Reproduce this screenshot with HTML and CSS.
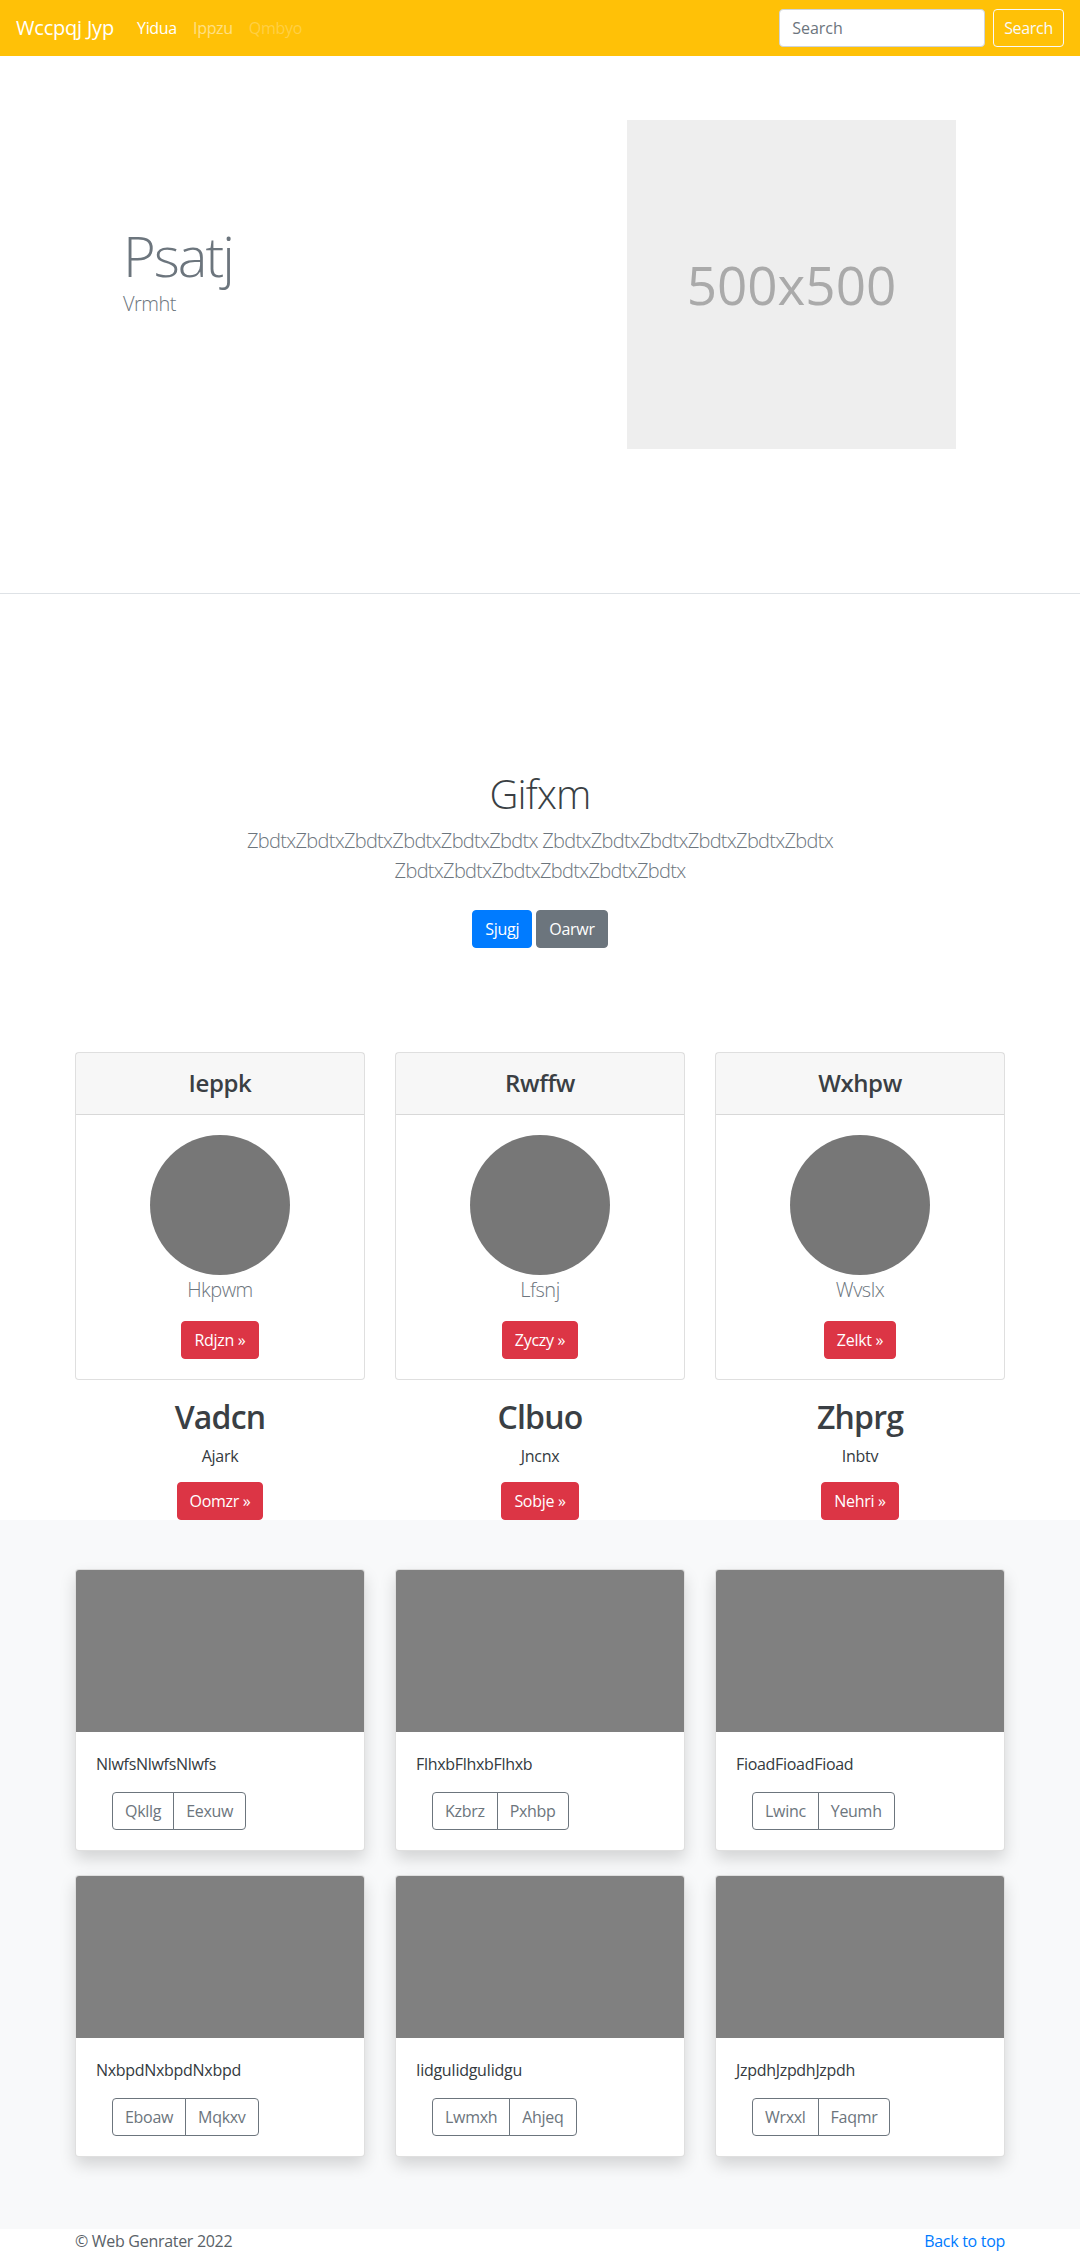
FILE: index.html
```html
<!DOCTYPE html>
<html lang="en">
<head>
<meta charset="utf-8">
<title>Wccpqj Jyp</title>
<link rel="stylesheet" href="styles.css">
</head>
<body>
<nav class="navbar">
  <a class="brand" href="#">Wccpqj Jyp</a>
  <ul class="nav-links">
    <li><a class="nav-link active" href="#">Yidua</a></li>
    <li><a class="nav-link" href="#">Ippzu</a></li>
    <li><a class="nav-link disabled" href="#">Qmbyo</a></li>
  </ul>
  <form class="search">
    <input class="search-input" type="text" placeholder="Search">
    <button class="btn btn-outline-light" type="button">Search</button>
  </form>
</nav>

<section class="hero">
  <div class="hero-inner">
    <div class="hero-text">
      <h1 class="hero-title">Psatj</h1>
      <p class="hero-sub">Vrmht</p>
    </div>
    <div class="placeholder">500x500</div>
  </div>
</section>

<section class="jumbotron">
  <div class="jumbo-inner">
    <h1 class="jumbo-title">Gifxm</h1>
    <p class="lead">ZbdtxZbdtxZbdtxZbdtxZbdtxZbdtx ZbdtxZbdtxZbdtxZbdtxZbdtxZbdtx ZbdtxZbdtxZbdtxZbdtxZbdtxZbdtx</p>
    <p class="jumbo-actions"><a class="btn btn-primary" href="#">Sjugj</a> <a class="btn btn-secondary" href="#">Oarwr</a></p>
  </div>
</section>

<section class="pricing">
  <div class="container row">
    <div class="col center">
      <div class="pcard">
        <div class="pcard-header"><h4>Ieppk</h4></div>
        <div class="pcard-body">
          <div class="circle"></div>
          <p class="pcard-name">Hkpwm</p>
          <a class="btn btn-danger" href="#">Rdjzn »</a>
        </div>
      </div>
      <div class="feature">
        <h2>Vadcn</h2>
        <p>Ajark</p>
        <a class="btn btn-danger" href="#">Oomzr »</a>
      </div>
    </div>
    <div class="col center">
      <div class="pcard">
        <div class="pcard-header"><h4>Rwffw</h4></div>
        <div class="pcard-body">
          <div class="circle"></div>
          <p class="pcard-name">Lfsnj</p>
          <a class="btn btn-danger" href="#">Zyczy »</a>
        </div>
      </div>
      <div class="feature">
        <h2>Clbuo</h2>
        <p>Jncnx</p>
        <a class="btn btn-danger" href="#">Sobje »</a>
      </div>
    </div>
    <div class="col center">
      <div class="pcard">
        <div class="pcard-header"><h4>Wxhpw</h4></div>
        <div class="pcard-body">
          <div class="circle"></div>
          <p class="pcard-name">Wvslx</p>
          <a class="btn btn-danger" href="#">Zelkt »</a>
        </div>
      </div>
      <div class="feature">
        <h2>Zhprg</h2>
        <p>Inbtv</p>
        <a class="btn btn-danger" href="#">Nehri »</a>
      </div>
    </div>
  </div>
</section>

<section class="album">
  <div class="container row wrap">
    <div class="col">
      <div class="acard">
        <div class="acard-img"></div>
        <div class="acard-body">
          <p class="acard-text">NlwfsNlwfsNlwfs</p>
          <div class="btn-group"><a class="btn btn-outline-secondary" href="#">Qkllg</a><a class="btn btn-outline-secondary" href="#">Eexuw</a></div>
        </div>
      </div>
    </div>
    <div class="col">
      <div class="acard">
        <div class="acard-img"></div>
        <div class="acard-body">
          <p class="acard-text">FlhxbFlhxbFlhxb</p>
          <div class="btn-group"><a class="btn btn-outline-secondary" href="#">Kzbrz</a><a class="btn btn-outline-secondary" href="#">Pxhbp</a></div>
        </div>
      </div>
    </div>
    <div class="col">
      <div class="acard">
        <div class="acard-img"></div>
        <div class="acard-body">
          <p class="acard-text">FioadFioadFioad</p>
          <div class="btn-group"><a class="btn btn-outline-secondary" href="#">Lwinc</a><a class="btn btn-outline-secondary" href="#">Yeumh</a></div>
        </div>
      </div>
    </div>
    <div class="col">
      <div class="acard">
        <div class="acard-img"></div>
        <div class="acard-body">
          <p class="acard-text">NxbpdNxbpdNxbpd</p>
          <div class="btn-group"><a class="btn btn-outline-secondary" href="#">Eboaw</a><a class="btn btn-outline-secondary" href="#">Mqkxv</a></div>
        </div>
      </div>
    </div>
    <div class="col">
      <div class="acard">
        <div class="acard-img"></div>
        <div class="acard-body">
          <p class="acard-text">IidguIidguIidgu</p>
          <div class="btn-group"><a class="btn btn-outline-secondary" href="#">Lwmxh</a><a class="btn btn-outline-secondary" href="#">Ahjeq</a></div>
        </div>
      </div>
    </div>
    <div class="col">
      <div class="acard">
        <div class="acard-img"></div>
        <div class="acard-body">
          <p class="acard-text">JzpdhJzpdhJzpdh</p>
          <div class="btn-group"><a class="btn btn-outline-secondary" href="#">Wrxxl</a><a class="btn btn-outline-secondary" href="#">Faqmr</a></div>
        </div>
      </div>
    </div>
  </div>
</section>

<footer class="footer">
  <div class="footer-inner">
    <p>© Web Genrater 2022</p>
    <p><a href="#">Back to top</a></p>
  </div>
</footer>
</body>
</html>
```

FILE: styles.css
```css
* { box-sizing: border-box; }

body {
  margin: 0;
  font-family: "Open Sans", Lato, "Liberation Sans", sans-serif;
  font-size: 16px;
  line-height: 1.5;
  color: #343a40;
  background: #fff;
}

/* Navbar */
.navbar {
  display: flex;
  align-items: center;
  height: 56px;
  padding: 0 16px;
  background: #ffc107;
}
.brand {
  font-size: 20px;
  color: #fff;
  margin-right: 15px;
  text-decoration: none;
  line-height: 1.5;
  letter-spacing: -0.2px;
}
.nav-links {
  display: flex;
  list-style: none;
  margin: 0;
  padding: 0;
}
.nav-link {
  display: block;
  padding: 8px;
  color: rgba(255, 255, 255, 0.5);
  text-decoration: none;
  letter-spacing: -0.3px;
}
.nav-link.active { color: #fff; }
.nav-link.disabled { color: rgba(255, 255, 255, 0.25); }
.search {
  margin: 0 0 0 auto;
  display: flex;
  align-items: center;
}
.search-input {
  width: 206px;
  height: 38px;
  padding: 6px 12px;
  font-family: inherit;
  font-size: 16px;
  border: 1px solid #ced4da;
  border-radius: 4px;
  color: #495057;
  background: #fff;
}
.search-input::placeholder { color: #6c757d; }

/* Buttons */
.btn {
  display: inline-block;
  font-family: inherit;
  font-size: 16px;
  font-weight: 400;
  line-height: 1.5;
  padding: 6px 12px;
  border: 1px solid transparent;
  border-radius: 4px;
  text-decoration: none;
  vertical-align: middle;
  letter-spacing: -0.3px;
  cursor: pointer;
}
.btn-outline-light {
  color: #f8f9fa;
  border-color: #f8f9fa;
  background: transparent;
  margin-left: 8px;
  padding: 6px 10px;
}
.btn-primary { background: #007bff; border-color: #007bff; color: #fff; }
.btn-secondary { background: #6c757d; border-color: #6c757d; color: #fff; }
.btn-danger { background: #dc3545; border-color: #dc3545; color: #fff; }
.btn-outline-secondary { color: #6c757d; border-color: #6c757d; background: transparent; }

/* Hero */
.hero { border-bottom: 1px solid #dee2e6; }
.hero-inner {
  width: 960px;
  margin: 0 auto;
  display: flex;
  justify-content: space-between;
  align-items: flex-start;
  padding: 64px 0 144px;
}
.hero-text { padding: 102px 0 0 63px; }
.hero-title {
  font-size: 56px;
  font-weight: 300;
  line-height: 1.2;
  color: #6c757d;
  margin: 0;
  letter-spacing: -2px;
}
.hero-sub {
  font-size: 20px;
  font-weight: 300;
  color: #6c757d;
  margin: 0;
  letter-spacing: -0.5px;
}
.placeholder {
  width: 329px;
  height: 329px;
  margin-right: 64px;
  background: #eeeeee;
  color: #aaaaaa;
  display: flex;
  align-items: center;
  justify-content: center;
  font-size: 53px;
}

/* Jumbotron */
.jumbotron {
  padding: 176px 0 48px;
  text-align: center;
}
.jumbo-inner { max-width: 700px; margin: 0 auto; }
.jumbo-title {
  font-size: 40px;
  font-weight: 300;
  line-height: 1.2;
  margin: 0 0 8px;
  color: #3a3f44;
  letter-spacing: -0.8px;
}
.lead {
  font-size: 20px;
  font-weight: 300;
  color: #6c757d;
  margin: 0 0 16px;
  letter-spacing: -0.7px;
}
.jumbo-actions { margin: 0; }
.jumbo-actions .btn { margin: 8px 0; }

/* Shared grid */
.container { width: 960px; margin: 0 auto; }
.row { display: flex; }
.row.wrap { flex-wrap: wrap; }
.col { width: 320px; padding: 0 15px; }
.center { text-align: center; }

/* Pricing cards */
.pricing { padding-top: 48px; }
.pcard {
  border: 1px solid rgba(0, 0, 0, 0.125);
  border-radius: 4px;
  background: #fff;
}
.pcard-header {
  padding: 16px 20px;
  background: rgba(0, 0, 0, 0.03);
  border-bottom: 1px solid rgba(0, 0, 0, 0.125);
}
.pcard-header h4 {
  margin: 0;
  font-size: 24px;
  font-weight: 600;
  line-height: 1.2;
  color: #3a3f44;
  letter-spacing: -0.4px;
}
.pcard-body { padding: 20px; }
.circle {
  width: 140px;
  height: 140px;
  border-radius: 50%;
  background: #777;
  margin: 0 auto;
}
.pcard-name {
  font-size: 20px;
  font-weight: 300;
  color: #6c757d;
  margin: 0 0 16px;
  letter-spacing: -0.5px;
}
.feature h2 {
  font-size: 32px;
  font-weight: 600;
  line-height: 1.2;
  margin: 18px 0 8px;
  color: #3a3f44;
  letter-spacing: -0.8px;
}
.feature p { margin: 0 0 14px; letter-spacing: -0.3px; }

/* Album */
.album {
  background: #f8f9fa;
  padding: 49px 0 48px;
}
.acard {
  border: 1px solid rgba(0, 0, 0, 0.125);
  border-radius: 4px;
  background: #fff;
  box-shadow: 0 8px 16px rgba(0, 0, 0, 0.15);
  margin-bottom: 24px;
  overflow: hidden;
}
.acard-img { height: 162px; background: #808080; }
.acard-body { padding: 20px; }
.acard-text { margin: 0 0 16px; letter-spacing: -0.3px; }
.btn-group { display: inline-flex; margin-left: 16px; vertical-align: top; }
.btn-group .btn:first-child { border-top-right-radius: 0; border-bottom-right-radius: 0; }
.btn-group .btn + .btn { margin-left: -1px; border-top-left-radius: 0; border-bottom-left-radius: 0; }

/* Footer */
.footer { color: #5a6268; }
.footer-inner {
  width: 960px;
  margin: 0 auto;
  padding: 0 15px;
  display: flex;
  justify-content: space-between;
  letter-spacing: -0.3px;
}
.footer p { margin: 0 0 16px; }
.footer a { color: #007bff; text-decoration: none; }
```
